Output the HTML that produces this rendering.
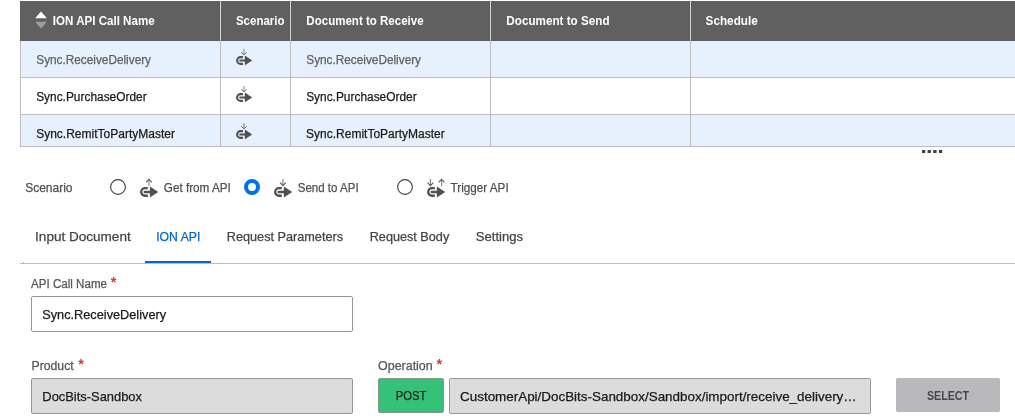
<!DOCTYPE html>
<html lang="en">
<head>
<meta charset="utf-8">
<title>ION API</title>
<style>
html,body{margin:0;padding:0;background:#fff;}
body{width:1015px;height:420px;position:relative;overflow:hidden;font-family:"Liberation Sans",sans-serif;}
#root{position:absolute;left:0;top:0;width:1015px;height:420px;overflow:hidden;will-change:transform;}
.a{position:absolute;}
.t{position:absolute;left:0;margin:0;-webkit-text-stroke:0.25px currentColor;white-space:pre;line-height:40px;transform-origin:0 50%;}
.ic{position:absolute;overflow:visible;}
.radio-on{position:absolute;width:8px;height:8px;border:4px solid #0072ed;border-radius:50%;background:#fff;}
.inp{position:absolute;box-sizing:border-box;border:1px solid #959595;border-radius:2px;background:#fff;}
.inp.ro{background:#dcdcdc;border-color:#969696;}
.req{position:absolute;color:#e03535;font-size:14.5px;font-weight:700;line-height:20px;}
</style>
</head>
<body>
<div id="root">
<section aria-label="ION API calls">
<!-- header row -->
<div class="a" style="left:20px;top:1px;width:995px;height:39px;background:#606060"></div>
<div class="a" style="left:20px;top:40px;width:995px;height:1px;background:#5b5f64"></div>
<!-- body rows -->
<div class="a" style="left:20px;top:41px;width:995px;height:36px;background:#e6f1fd"></div>
<div class="a" style="left:20px;top:78px;width:995px;height:36px;background:#fff"></div>
<div class="a" style="left:20px;top:115px;width:995px;height:31px;background:#e6f1fd"></div>
<div class="a" style="left:20px;top:77px;width:995px;height:1px;background:#bdbdbd"></div>
<div class="a" style="left:20px;top:114px;width:995px;height:1px;background:#bdbdbd"></div>
<div class="a" style="left:20px;top:146px;width:995px;height:1px;background:#bdbdbd"></div>
<div class="a" style="left:20px;top:41px;width:1px;height:106px;background:#bdbdbd"></div>
<div class="a" style="left:220px;top:1px;width:1px;height:39px;background:#d4d4d4"></div>
<div class="a" style="left:220px;top:40px;width:1px;height:106px;background:#bdbdbd"></div>
<div class="a" style="left:290px;top:1px;width:1px;height:39px;background:#d4d4d4"></div>
<div class="a" style="left:290px;top:40px;width:1px;height:106px;background:#bdbdbd"></div>
<div class="a" style="left:490px;top:1px;width:1px;height:39px;background:#d4d4d4"></div>
<div class="a" style="left:490px;top:40px;width:1px;height:106px;background:#bdbdbd"></div>
<div class="a" style="left:690px;top:1px;width:1px;height:39px;background:#d4d4d4"></div>
<div class="a" style="left:690px;top:40px;width:1px;height:106px;background:#bdbdbd"></div>
<svg class="ic" style="left:35px;top:11px" width="12" height="18" viewBox="0 0 12 18" aria-hidden="true"><path d="M0.2 7.2L6 0.6L11.8 7.2z" fill="#fff"/><path d="M0.2 10.8L6 17.4L11.8 10.8z" fill="#9c9c9c"/></svg>
<span class="t" style="top:1px;font-size:13px;font-weight:700;color:#fff;-webkit-text-stroke:0;transform:translateX(52.86px) scaleX(0.8895);">ION API Call Name</span>
<span class="t" style="top:1px;font-size:13px;font-weight:700;color:#fff;-webkit-text-stroke:0;transform:translateX(235.90px) scaleX(0.8869);">Scenario</span>
<span class="t" style="top:1px;font-size:13px;font-weight:700;color:#fff;-webkit-text-stroke:0;transform:translateX(306.35px) scaleX(0.8872);">Document to Receive</span>
<span class="t" style="top:1px;font-size:13px;font-weight:700;color:#fff;-webkit-text-stroke:0;transform:translateX(506.33px) scaleX(0.8986);">Document to Send</span>
<span class="t" style="top:1px;font-size:13px;font-weight:700;color:#fff;-webkit-text-stroke:0;transform:translateX(705.57px) scaleX(0.9032);">Schedule</span>
<span class="t" style="top:40px;font-size:12.5px;font-weight:400;color:#5f5f5f;transform:translateX(36.26px) scaleX(0.9440);">Sync.ReceiveDelivery</span>
<svg class="ic" style="left:236px;top:49px" width="16" height="16" viewBox="0 0 18 18" aria-hidden="true"><path d="M7.8 9.15H5a3.8 3.8 0 0 0 0 7.6h2.8" fill="none" stroke="#505050" stroke-width="2.3"/><path d="M4.8 12.95H11" fill="none" stroke="#505050" stroke-width="2.5" stroke-linecap="round"/><path d="M9.9 7.4L18.2 12.9L9.9 18.4z" fill="#505050"/><path d="M8.9 0V6" fill="none" stroke="#8c8c8c" stroke-width="1.2"/><path d="M6.0 3.7L8.9 6.6L11.8 3.7" fill="none" stroke="#5a5a5a" stroke-width="1.1"/></svg>
<span class="t" style="top:40px;font-size:12.5px;font-weight:400;color:#5f5f5f;transform:translateX(306.26px) scaleX(0.9440);">Sync.ReceiveDelivery</span>
<span class="t" style="top:77px;font-size:12.5px;font-weight:400;color:#1a1a1a;transform:translateX(36.13px) scaleX(0.9525);">Sync.PurchaseOrder</span>
<svg class="ic" style="left:236px;top:86px" width="16" height="16" viewBox="0 0 18 18" aria-hidden="true"><path d="M7.8 9.15H5a3.8 3.8 0 0 0 0 7.6h2.8" fill="none" stroke="#505050" stroke-width="2.3"/><path d="M4.8 12.95H11" fill="none" stroke="#505050" stroke-width="2.5" stroke-linecap="round"/><path d="M9.9 7.4L18.2 12.9L9.9 18.4z" fill="#505050"/><path d="M8.9 0V6" fill="none" stroke="#8c8c8c" stroke-width="1.2"/><path d="M6.0 3.7L8.9 6.6L11.8 3.7" fill="none" stroke="#5a5a5a" stroke-width="1.1"/></svg>
<span class="t" style="top:77px;font-size:12.5px;font-weight:400;color:#1a1a1a;transform:translateX(306.13px) scaleX(0.9525);">Sync.PurchaseOrder</span>
<span class="t" style="top:114px;font-size:12.5px;font-weight:400;color:#1a1a1a;transform:translateX(36.13px) scaleX(0.9615);">Sync.RemitToPartyMaster</span>
<svg class="ic" style="left:236px;top:123px" width="16" height="16" viewBox="0 0 18 18" aria-hidden="true"><path d="M7.8 9.15H5a3.8 3.8 0 0 0 0 7.6h2.8" fill="none" stroke="#505050" stroke-width="2.3"/><path d="M4.8 12.95H11" fill="none" stroke="#505050" stroke-width="2.5" stroke-linecap="round"/><path d="M9.9 7.4L18.2 12.9L9.9 18.4z" fill="#505050"/><path d="M8.9 0V6" fill="none" stroke="#8c8c8c" stroke-width="1.2"/><path d="M6.0 3.7L8.9 6.6L11.8 3.7" fill="none" stroke="#5a5a5a" stroke-width="1.1"/></svg>
<span class="t" style="top:114px;font-size:12.5px;font-weight:400;color:#1a1a1a;transform:translateX(306.12px) scaleX(0.9590);">Sync.RemitToPartyMaster</span>
<!-- splitter handle -->
<svg class="ic" style="left:920px;top:148px" width="26" height="8" viewBox="0 0 26 8" aria-hidden="true"><rect x="2.0" y="2" width="3.3" height="3" fill="#404040"/><rect x="7.6" y="2" width="3.3" height="3" fill="#404040"/><rect x="13.25" y="2" width="3.3" height="3" fill="#404040"/><rect x="18.9" y="2" width="3.3" height="3" fill="#404040"/></svg>
</section>
<section aria-label="Scenario">
<span class="t" style="top:168px;font-size:12.5px;font-weight:400;color:#4f4f4f;transform:translateX(25.19px) scaleX(0.9588);">Scenario</span>
<svg class="ic" style="left:109px;top:178px" width="18" height="18" viewBox="0 0 18 18" aria-hidden="true"><circle cx="9" cy="9" r="7.4" fill="#fff" stroke="#42424a" stroke-width="1.1"/></svg>
<svg class="ic" style="left:140px;top:179px" width="18" height="18" viewBox="0 0 18 18" aria-hidden="true"><path d="M7.8 9.15H5a3.8 3.8 0 0 0 0 7.6h2.8" fill="none" stroke="#505050" stroke-width="2.3"/><path d="M4.8 12.95H11" fill="none" stroke="#505050" stroke-width="2.5" stroke-linecap="round"/><path d="M9.9 7.4L18.2 12.9L9.9 18.4z" fill="#505050"/><path d="M8.9 7.2V1" fill="none" stroke="#8c8c8c" stroke-width="1.2"/><path d="M6.0 3.3L8.9 0.4L11.8 3.3" fill="none" stroke="#5a5a5a" stroke-width="1.1"/></svg>
<span class="t" style="top:168px;font-size:12.5px;font-weight:400;color:#4f4f4f;transform:translateX(163.81px) scaleX(0.9366);">Get from API</span>
<div class="radio-on" style="left:244px;top:179px"></div>
<svg class="ic" style="left:274px;top:179px" width="18" height="18" viewBox="0 0 18 18" aria-hidden="true"><path d="M7.8 9.15H5a3.8 3.8 0 0 0 0 7.6h2.8" fill="none" stroke="#505050" stroke-width="2.3"/><path d="M4.8 12.95H11" fill="none" stroke="#505050" stroke-width="2.5" stroke-linecap="round"/><path d="M9.9 7.4L18.2 12.9L9.9 18.4z" fill="#505050"/><path d="M8.9 0V6" fill="none" stroke="#8c8c8c" stroke-width="1.2"/><path d="M6.0 3.7L8.9 6.6L11.8 3.7" fill="none" stroke="#5a5a5a" stroke-width="1.1"/></svg>
<span class="t" style="top:168px;font-size:12.5px;font-weight:400;color:#4f4f4f;transform:translateX(297.72px) scaleX(0.9220);">Send to API</span>
<svg class="ic" style="left:396px;top:178px" width="18" height="18" viewBox="0 0 18 18" aria-hidden="true"><circle cx="9" cy="9" r="7.4" fill="#fff" stroke="#42424a" stroke-width="1.1"/></svg>
<svg class="ic" style="left:426px;top:179px" width="19" height="18" viewBox="0 0 19 18" aria-hidden="true"><g transform="translate(1 0)"><path d="M7.8 9.15H5a3.8 3.8 0 0 0 0 7.6h2.8" fill="none" stroke="#505050" stroke-width="2.3"/><path d="M4.8 12.95H11" fill="none" stroke="#505050" stroke-width="2.5" stroke-linecap="round"/><path d="M9.9 7.4L18.2 12.9L9.9 18.4z" fill="#505050"/></g><path d="M4.4 0V6" fill="none" stroke="#8c8c8c" stroke-width="1.2"/><path d="M1.5 3.7L4.4 6.6L7.3 3.7" fill="none" stroke="#5a5a5a" stroke-width="1.1"/><path d="M15.6 7.2V1" fill="none" stroke="#8c8c8c" stroke-width="1.2"/><path d="M12.7 3.3L15.6 0.4L18.5 3.3" fill="none" stroke="#5a5a5a" stroke-width="1.1"/></svg>
<span class="t" style="top:168px;font-size:12.5px;font-weight:400;color:#4f4f4f;transform:translateX(450.54px) scaleX(0.9364);">Trigger API</span>
</section>
<nav aria-label="Tabs">
<div class="a" style="left:20px;top:263px;width:995px;height:1px;background:#bdbdbd"></div>
<div class="a" style="left:23px;top:262px;width:1px;height:1px;background:#8fbef0"></div>
<div class="a" style="left:145px;top:261px;width:66px;height:2px;background:#0766c4"></div>
<span class="t" style="top:217px;font-size:13px;font-weight:400;color:#444;transform:translateX(35.11px) scaleX(1.0413);">Input Document</span>
<span class="t" style="top:217px;font-size:13px;font-weight:400;color:#0066d4;transform:translateX(156.20px) scaleX(0.9407);">ION API</span>
<span class="t" style="top:217px;font-size:13px;font-weight:400;color:#444;transform:translateX(226.80px) scaleX(0.9751);">Request Parameters</span>
<span class="t" style="top:217px;font-size:13px;font-weight:400;color:#444;transform:translateX(369.72px) scaleX(0.9734);">Request Body</span>
<span class="t" style="top:217px;font-size:13px;font-weight:400;color:#444;transform:translateX(475.76px) scaleX(1.0053);">Settings</span>
</nav>
<section aria-label="ION API settings">
<span class="t" style="top:264px;font-size:12.5px;font-weight:400;color:#555;transform:translateX(31.06px) scaleX(0.9267);">API Call Name</span>
<span class="req" style="left:110.8px;top:271.8px">*</span>
<div class="inp" style="left:31px;top:296px;width:322px;height:36px"></div>
<span class="t" style="top:295px;font-size:13px;font-weight:400;color:#1a1a1a;transform:translateX(42.23px) scaleX(0.9795);">Sync.ReceiveDelivery</span>
<span class="t" style="top:346px;font-size:12.5px;font-weight:400;color:#555;transform:translateX(31.50px) scaleX(0.9792);">Product</span>
<span class="req" style="left:78.2px;top:353.8px">*</span>
<div class="inp ro" style="left:31px;top:378px;width:322px;height:36px"></div>
<span class="t" style="top:377px;font-size:13px;font-weight:400;color:#1a1a1a;transform:translateX(42.34px) scaleX(0.9917);">DocBits-Sandbox</span>
<span class="t" style="top:346px;font-size:12.5px;font-weight:400;color:#555;transform:translateX(378.02px) scaleX(0.9965);">Operation</span>
<span class="req" style="left:436.6px;top:353.8px">*</span>
<div class="a" style="left:378px;top:378px;width:66px;height:35px;background:#35c178;box-sizing:border-box;border:1px solid #84978c;border-radius:2px"></div>
<span class="t" style="top:376px;font-size:13px;font-weight:400;color:#16241c;transform:translateX(395.82px) scaleX(0.8600);">POST</span>
<div class="inp ro" style="left:449px;top:378px;width:422px;height:36px"></div>
<span class="t" style="top:377px;font-size:13px;font-weight:400;color:#1a1a1a;transform:translateX(460.06px) scaleX(1.0319);">CustomerApi/DocBits-Sandbox/Sandbox/import/receive_delivery…</span>
<div class="a" style="left:896px;top:378px;width:104px;height:34px;background:#b9b9bc;border-radius:2px"></div>
<span class="t" style="top:376px;font-size:13px;font-weight:700;color:#464646;-webkit-text-stroke:0;transform:translateX(926.88px) scaleX(0.8224);">SELECT</span>
</section>
</div>
</body>
</html>
